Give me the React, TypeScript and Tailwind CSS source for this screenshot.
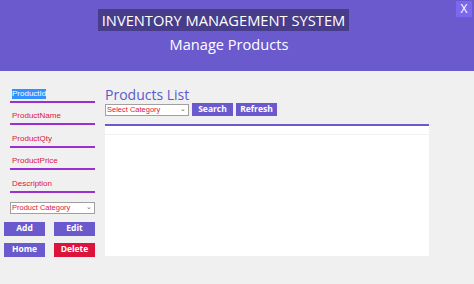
import React from "react";

const fields = ["ProductId", "ProductName", "ProductQty", "ProductPrice", "Description"];

export default function App() {
  return (
    <div className="w-[474px] h-[284px] bg-[#f0f0f0] overflow-hidden" style={{ fontFamily: '"Open Sans", sans-serif' }}>
      <header className="relative h-[71px] bg-[#6a5acd] flex flex-col items-center">
        <div className="mt-[9px] ml-[-27px] h-[22px] px-[4px] bg-[#483d8b] text-white text-[14.7px] leading-[22px]">
          INVENTORY MANAGEMENT SYSTEM
        </div>
        <div className="mt-[2px] ml-[-16px] text-white text-[14.6px] leading-[22px]">Manage Products</div>
        <div className="absolute right-[2px] top-[1px] w-[16px] h-[16px] bg-[#7b68ee] text-white text-[12px] leading-[16px] text-center">
          X
        </div>
      </header>
      <div className="flex">
        <div className="w-[105px] pl-[10px] pt-[9px]" style={{ fontFamily: '"Liberation Sans", Arial, sans-serif' }}>
          {fields.map((f, i) => (
            <div key={f} className="w-[85px] h-[22.5px] border-b-2 border-[#9b30d0] flex items-end pb-[2px]">
              <span
                className={`text-[8px] leading-[10px] ${i === 0 ? "ml-[2px] bg-[#3390ff] text-white" : "ml-[2px] text-[#dc143c]"}`}
              >
                {f}
              </span>
            </div>
          ))}
          <div className="mt-[9px] w-[85px] h-[12px] bg-white border border-[#a0a0a0] flex items-center justify-between px-[1px]">
            <span className="text-[7.5px] leading-[10px] text-[#dc143c]">Product Category</span>
            <span className="text-[7px] text-[#666] mr-[1px]">⌄</span>
          </div>
          <div className="ml-[-6px] mt-[8px] grid grid-cols-[41px_41px] gap-x-[9px] gap-y-[7px] text-white text-[8.5px] font-bold" style={{ fontFamily: '"Open Sans", sans-serif' }}>
            <div className="h-[14px] bg-[#6a5acd] flex items-center justify-center">Add</div>
            <div className="h-[14px] bg-[#6a5acd] flex items-center justify-center">Edit</div>
            <div className="h-[14px] bg-[#6a5acd] flex items-center justify-center">Home</div>
            <div className="h-[14px] bg-[#dc143c] flex items-center justify-center">Delete</div>
          </div>
        </div>
        <div className="flex-1 pt-[16px]">
          <div className="text-[14px] leading-[16px] text-[#5a5acd]">Products List</div>
          <div className="flex items-center gap-[3px]">
            <div
              className="w-[84px] h-[12px] bg-white border border-[#a0a0a0] flex items-center justify-between px-[1px]"
              style={{ fontFamily: '"Liberation Sans", Arial, sans-serif' }}
            >
              <span className="text-[7.5px] leading-[10px] text-[#dc143c]">Select Category</span>
              <span className="text-[7px] text-[#666] mr-[1px]">⌄</span>
            </div>
            <div className="w-[41px] h-[13px] bg-[#6a5acd] text-white text-[8.5px] font-bold flex items-center justify-center">
              Search
            </div>
            <div className="w-[41px] h-[13px] bg-[#6a5acd] text-white text-[8.5px] font-bold flex items-center justify-center">
              Refresh
            </div>
          </div>
          <div className="mt-[8px] w-[324px] h-[132px] bg-white border-t-2 border-[#6a5acd]">
            <div className="h-[9px] border-b border-[#f2f2f2]" />
          </div>
        </div>
      </div>
    </div>
  );
}
